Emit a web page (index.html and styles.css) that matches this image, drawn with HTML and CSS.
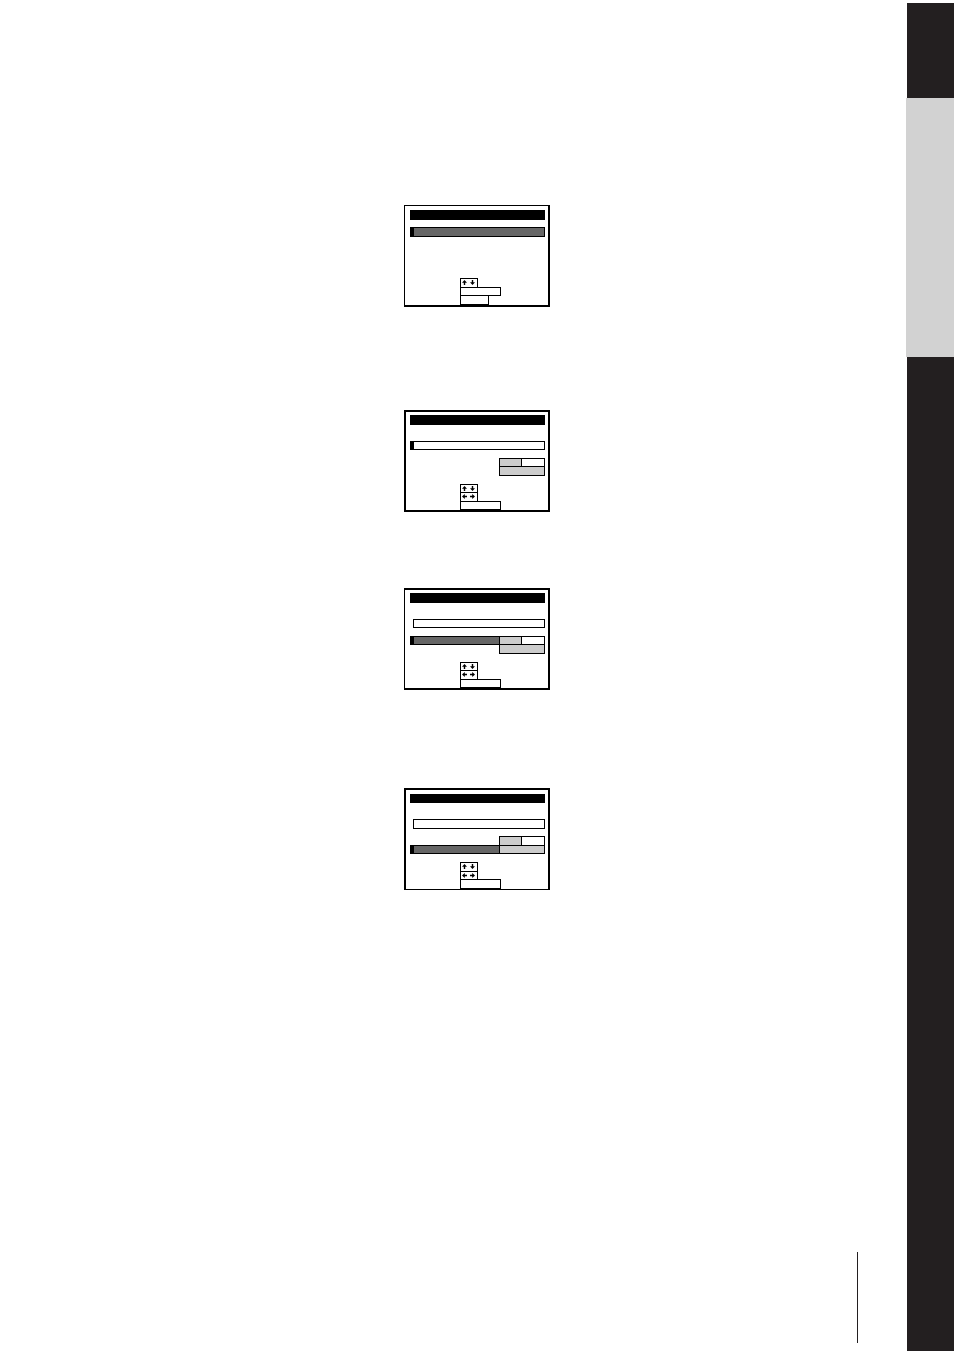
FILE: index.html
```html
<!DOCTYPE html>
<html lang="en">
<head>
  <meta charset="UTF-8">
  <title>Menu screens</title>
  <link rel="stylesheet" href="styles.css">
</head>
<body>

  <!-- Arrow shapes shared by all screens -->
  <svg class="defs" aria-hidden="true">
    <symbol id="up" viewBox="0 0 5 5"><path d="M2.5 0L5 2.8H3.2V5H1.8V2.8H0Z"/></symbol>
    <symbol id="down" viewBox="0 0 5 5"><path d="M2.5 5L5 2.2H3.2V0H1.8V2.2H0Z"/></symbol>
    <symbol id="left" viewBox="0 0 5 5"><path d="M0 2.5L2.8 0V1.8H5V3.2H2.8V5Z"/></symbol>
    <symbol id="right" viewBox="0 0 5 5"><path d="M5 2.5L2.2 0V1.8H0V3.2H2.2V5Z"/></symbol>
  </svg>

  <main class="page">
    <!-- Menu list -->
    <div class="screen screen-list">
      <div class="title"></div>
      <div class="field marked dark"></div>
      <div class="keys tall">
        <div class="key arrows"><svg><use href="#up"/></svg><svg><use href="#down"/></svg></div>
        <div class="key wide"></div>
        <div class="key medium"></div>
      </div>
    </div>

    <!-- Name field selected -->
    <div class="screen screen-name">
      <div class="title"></div>
      <div class="field marked"></div>
      <div class="settings">
        <div class="setting"><div class="value half"></div><div class="value"></div></div>
        <div class="setting"><div class="value full"></div></div>
      </div>
      <div class="keys">
        <div class="key arrows"><svg><use href="#up"/></svg><svg><use href="#down"/></svg></div>
        <div class="key arrows"><svg><use href="#left"/></svg><svg><use href="#right"/></svg></div>
        <div class="key wide"></div>
      </div>
    </div>

    <!-- First setting selected -->
    <div class="screen screen-first">
      <div class="title"></div>
      <div class="field"></div>
      <div class="settings">
        <div class="setting"><div class="label"></div><div class="value half"></div><div class="value"></div></div>
        <div class="setting"><div class="value full"></div></div>
      </div>
      <div class="keys">
        <div class="key arrows"><svg><use href="#up"/></svg><svg><use href="#down"/></svg></div>
        <div class="key arrows"><svg><use href="#left"/></svg><svg><use href="#right"/></svg></div>
        <div class="key wide"></div>
      </div>
    </div>

    <!-- Second setting selected -->
    <div class="screen screen-second">
      <div class="title"></div>
      <div class="field"></div>
      <div class="settings tall">
        <div class="setting"><div class="value half"></div><div class="value"></div></div>
        <div class="setting"><div class="label"></div><div class="value full"></div></div>
      </div>
      <div class="keys tall">
        <div class="key arrows"><svg><use href="#up"/></svg><svg><use href="#down"/></svg></div>
        <div class="key arrows"><svg><use href="#left"/></svg><svg><use href="#right"/></svg></div>
        <div class="key wide"></div>
      </div>
    </div>

    <footer class="footer"></footer>
  </main>

  <!-- Chapter tabs -->
  <aside class="tabs">
    <div class="tab tab-top"></div>
    <div class="tab tab-current"></div>
    <div class="tab tab-rest"></div>
  </aside>

</body>
</html>
```
FILE: styles.css
```css
* {
  box-sizing: border-box;
}

body {
  margin: 0;
  min-height: 100vh;
  display: flex;
  background: #fff;
  font-family: "Liberation Sans", sans-serif;
}

.defs {
  position: absolute;
  width: 0;
  height: 0;
}

.page {
  flex: 1;
  display: flex;
  flex-direction: column;
  align-items: center;
  padding: 205px 0 8px 48px;
}

/* Screens */
.screen {
  display: flex;
  flex-direction: column;
  width: 146px;
  min-height: 102px;
  padding: 3px 3px 0 4px;
  border: 2px solid #000;
}

.screen-list {
  padding: 4px 3px 0 5px;
  border-width: 1px 2px 2px 1px;
}

.screen-name {
  margin-top: 103px;
}

.screen-first {
  margin-top: 76px;
  padding-left: 5px;
  border-left-width: 1px;
}

.screen-second {
  margin-top: 98px;
  padding-top: 4px;
  border-bottom-width: 1px;
}

.title {
  height: 10px;
  background: #000;
}

.screen-second .title {
  height: 9px;
}

.field {
  height: 9px;
  margin: 16px 0 0 3px;
  border: 1px solid #000;
}

.screen-second .field {
  height: 10px;
}

.field.marked {
  margin-left: 0;
  border-left-width: 4px;
}

.field.dark {
  height: 10px;
  margin-top: 7px;
  background: #666;
}

/* Settings, neighbouring boxes share one line */
.settings {
  margin-top: 8px;
}

.settings.tall {
  margin-top: 7px;
}

.setting {
  display: flex;
  justify-content: flex-end;
  height: 9px;
}

.setting + .setting {
  height: 10px;
  margin-top: -1px;
}

.tall .setting {
  height: 10px;
}

.tall .setting + .setting {
  height: 9px;
}

.label {
  flex: 1;
  margin-right: -1px;
  border: 1px solid #000;
  border-left-width: 4px;
  background: #666;
}

.value {
  width: 24px;
  border: 1px solid #000;
}

.value.half {
  width: 23px;
  margin-right: -1px;
  background: #ccc;
}

.value.full {
  width: 46px;
  background: #ccc;
}

/* Key hints */
.keys {
  display: grid;
  grid-template-rows: 8px 9px 9px;
  margin: auto 0 0 50px;
}

.keys.tall {
  grid-template-rows: 9px 8px 10px;
}

.key {
  margin-bottom: -1px;
  border: 1px solid #000;
}

.key:last-child {
  margin-bottom: 0;
}

.key.arrows {
  display: flex;
  align-items: flex-start;
  gap: 3px;
  width: 18px;
  padding: 1px 0 0 1px;
}

.key.wide {
  width: 41px;
}

.key.medium {
  width: 29px;
}

.key svg {
  width: 5px;
  height: 5px;
}

.footer {
  align-self: flex-end;
  width: 1px;
  height: 91px;
  margin: auto 48px 0 0;
  background: #231f20;
}

/* Side tabs */
.tabs {
  display: flex;
  flex-direction: column;
  width: 48px;
  padding-top: 3px;
}

.tab {
  margin-left: 1px;
  background: #231f20;
}

.tab-top {
  height: 95px;
}

.tab-current {
  height: 259px;
  margin-left: 0;
  background: #d2d2d2;
}

.tab-rest {
  flex: 1;
}
```
